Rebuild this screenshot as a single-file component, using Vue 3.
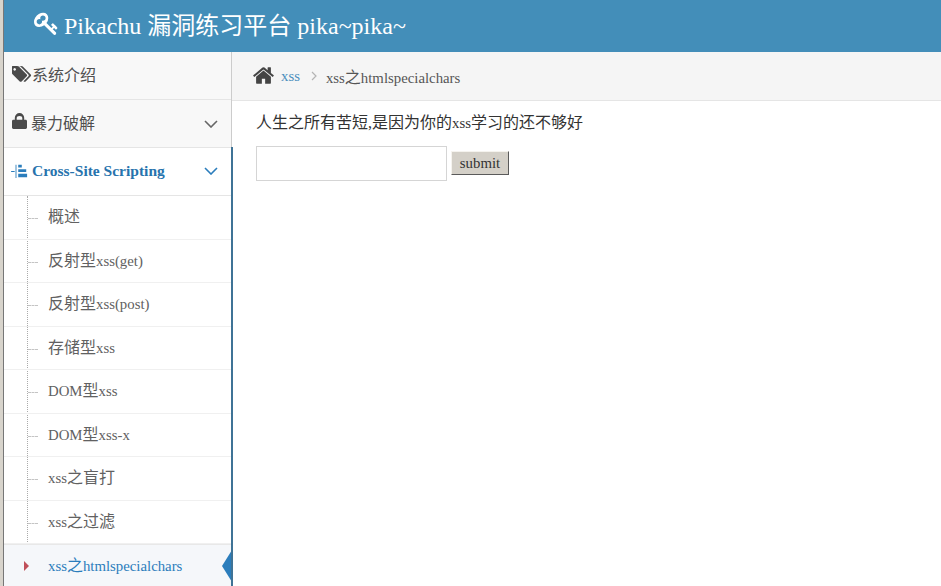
<template>
  <div class="page">
    <header class="navbar">
      <svg class="key" viewBox="0 0 1792 1792"><path :d="icons.key" /></svg>
      <span class="brand">Pikachu 漏洞练习平台 pika~pika~</span>
    </header>
    <div class="body-wrap">
      <aside class="sidebar">
        <div class="nav-top">
          <svg class="ico tag" viewBox="0 0 1920 1792"><path :d="icons.tags" /></svg>
          <span>系统介绍</span>
        </div>
        <div class="nav-top">
          <svg class="ico lock" viewBox="0 0 16 18"><path d="M1.500 7H3V5a5 5 0 0 1 10 0v2h1.500c.8 0 1.500.7 1.500 1.500v7c0 .8-.7 1.500-1.500 1.500h-13C.7 17 0 16.300 0 15.500v-7C0 7.700.7 7 1.500 7zM5 7h6V5.500a3 2.500 0 0 0-6 0z" /></svg>
          <span>暴力破解</span>
          <svg class="chev" viewBox="0 0 14 8"><path d="M1 1l6 6 6-6" /></svg>
        </div>
        <div class="nav-open">
          <svg class="tree-ico" viewBox="0 0 20 18">
            <path d="M0 9h4v1H0zM5 2h1v15H5z" />
            <path d="M8 2h4v3H8zM8 7h9v3H8zM8 12h10v4H8z" />
          </svg>
          <span>Cross-Site Scripting</span>
          <svg class="chev" viewBox="0 0 14 8"><path d="M1 1l6 6 6-6" /></svg>
        </div>
        <ul class="submenu">
          <li v-for="item in subItems" :key="item.join()" :class="{ active: item === activeItem }">
            <span v-for="(part, i) in item" :key="i" :class="{ lat: /^[\x00-\x7f]+$/.test(part) }">{{ part }}</span>
          </li>
        </ul>
      </aside>
      <main class="content">
        <div class="breadcrumbs">
          <svg class="home" viewBox="0 0 1792 1792"><path :d="icons.home" /></svg>
          <a class="crumb-link lat">xss</a>
          <svg class="crumb-sep" viewBox="0 0 6 10"><path d="M1 1l4 4-4 4" /></svg>
          <span class="crumb-cur"><span class="lat">xss</span>之<span class="lat">htmlspecialchars</span></span>
        </div>
        <div class="page-body">
          <p class="lead">人生之所有苦短,是因为你的<span class="lat">xss</span>学习的还不够好</p>
          <form class="form" @submit.prevent>
            <input class="text-in" type="text" />
            <input class="btn" type="submit" value="submit" />
          </form>
        </div>
      </main>
    </div>
  </div>
</template>

<script setup>
const icons = {
  key: 'M832 512q0-80-56-136t-136-56-136 56-56 136q0 42 19 83-41-19-83-19-80 0-136 56t-56 136 56 136 136 56 136-56 56-136q0-42-19-83 41 19 83 19 80 0 136-56t56-136zm851 704q0 17-49 66t-66 49q-9 0-28.5-16t-36.5-33-38.5-40-24.5-26l-96 96 220 220q28 28 28 68 0 42-39 81t-81 39q-40 0-68-28l-671-671q-176 131-365 131-163 0-265.5-102.5t-102.5-265.5q0-160 95-313t248-248 313-95q163 0 265.5 102.5t102.5 265.5q0 189-131 365l355 355 96-96q-3-3-26-24.5t-40-38.5-33-36.5-16-28.5q0-17 49-66t66-49q13 0 23 10 6 6 46 44.5t82 79.5 86.5 86 73 78 28.5 41z',
  tags: 'M384 448q0-53-37.5-90.5t-90.5-37.5-90.5 37.5-37.5 90.5 37.5 90.5 90.5 37.5 90.5-37.5 37.5-90.5zm1067 576q0 53-37 90l-491 492q-39 37-91 37-53 0-90-37l-715-716q-38-37-64.5-101t-26.5-117v-416q0-52 38-90t90-38h416q53 0 117 26.5t102 64.5l715 714q37 39 37 91zm384 0q0 53-37 90l-491 492q-38 38-91 38-36 0-59-14t-53-45l470-470q37-37 37-90 0-52-37-91l-715-714q-38-38-102-64.5t-117-26.5h224q53 0 117 26.5t102 64.5l715 714q37 39 37 91z',
  home: 'M1472 992v480q0 26-19 45t-45 19h-384v-384h-256v384h-384q-26 0-45-19t-19-45v-480q0-1 .5-3t.5-3l575-474 575 474q1 2 1 6zm223-69l-62 74q-8 9-21 11h-3q-13 0-21-7l-692-577-692 577q-12 8-24 7-13-2-21-11l-62-74q-8-10-7-23.5t11-21.5l719-599q32-26 76-26t76 26l244 204v-195q0-14 9-23t23-9h192q14 0 23 9t9 23v408l219 182q10 8 11 21.5t-7 23.5z',
}

const activeItem = ['xss', '之', 'htmlspecialchars']
const subItems = [
  ['概述'],
  ['反射型', 'xss(get)'],
  ['反射型', 'xss(post)'],
  ['存储型', 'xss'],
  ['DOM', '型', 'xss'],
  ['DOM', '型', 'xss-x'],
  ['xss', '之盲打'],
  ['xss', '之过滤'],
  activeItem,
]
</script>

<style>
html, body {
  margin: 0;
  height: 100%;
  overflow: hidden;
  background: #fff;
}
</style>

<style scoped>
.page {
  height: 586px;
  overflow: hidden;
  border-left: 3px solid #d8d4cc;
  font-family: "Liberation Serif", "Noto Sans CJK SC", serif;
  color: #393939;
  font-size: 16px;
}

.navbar {
  height: 52px;
  background: #438eb9;
  border-left: 1px solid #777;
  color: #fff;
  display: flex;
  align-items: center;
  padding-left: 30px;
  padding-bottom: 5px;
  gap: 5px;
  box-sizing: border-box;
}

.key {
  width: 25px;
  height: 25px;
  fill: #fff;
}

.brand {
  font-size: 24px;
}

.body-wrap {
  display: flex;
  height: 534px;
  border-left: 1px solid #777;
}

.sidebar {
  width: 227px;
  flex: none;
  border-right: 1px solid #ccc;
  position: relative;
  z-index: 1;
}

.nav-top,
.nav-open {
  display: flex;
  align-items: center;
  box-sizing: border-box;
  height: 48px;
  border-bottom: 1px solid #e5e5e5;
}

.nav-top {
  padding: 0 0 4px 8px;
  background: #f8f8f8;
  color: #4f4f4f;
}

.nav-open {
  padding: 0 0 2px 7px;
  background: #fff;
  color: #2773ad;
  font-size: 15.5px;
  font-weight: 700;
}

.ico {
  height: 20px;
  width: 20px;
  fill: #4a4a4a;
}

.tag {
  width: 20px;
}

.lock {
  width: 15px;
  height: 17px;
  margin: 0 4px 0 0;
}

.chev {
  width: 14px;
  height: 8px;
  margin-left: auto;
  margin-right: 13px;
  fill: none;
  stroke: #666;
  stroke-width: 1.6;
}

.nav-top .chev {
  margin-top: 4px;
}

.nav-open .chev {
  stroke: #2b7dbc;
}

.tree-ico {
  width: 18px;
  height: 16px;
  margin-right: 3px;
  fill: #2b7dbc;
}

.submenu {
  list-style: none;
  margin: 0;
  padding: 0;
  position: relative;
}

.submenu::before {
  content: "";
  position: absolute;
  left: 23px;
  top: 0;
  bottom: 0;
  border-left: 1px dotted #aaa;
}

.submenu li {
  height: 43.5px;
  line-height: 41px;
  padding-left: 44px;
  box-sizing: border-box;
  border-bottom: 1px solid #f0f0f0;
  color: #616161;
  position: relative;
  white-space: nowrap;
}

.submenu li::before {
  content: "";
  position: absolute;
  left: 24px;
  top: 22px;
  width: 10px;
  border-top: 1px dashed #c4c4c4;
}

.submenu li.active {
  background: #f5f7fa;
  color: #2b7dbc;
  border-top: 1px solid #e8e8e8;
  line-height: 42px;
}

.submenu li.active::before {
  left: 20px;
  top: 16px;
  width: 0;
  border: 5px solid transparent;
  border-left-color: #c0505a;
  border-right: 0;
}

.submenu li.active::after {
  content: "";
  position: absolute;
  right: -1px;
  top: 5px;
  border: 16px solid transparent;
  border-right: 10px solid #2b7dbc;
  border-left: 0;
}

.sidebar::after {
  content: "";
  position: absolute;
  right: -2px;
  top: 95px;
  bottom: 0;
  width: 2px;
  background: #3f7396;
}

.lat {
  font-size: 14.8px;
}

.content {
  flex: 1;
  min-width: 0;
}

.breadcrumbs {
  height: 49px;
  box-sizing: border-box;
  background: #f5f5f5;
  border-bottom: 1px solid #e5e5e5;
  display: flex;
  align-items: center;
  padding-left: 20px;
}

.home {
  width: 23px;
  height: 23px;
  fill: #444;
  margin: -2px 5px 0 0;
}

.crumb-link {
  color: #4c8fbd;
  margin-left: 1px;
}

.crumb-sep {
  width: 6px;
  height: 10px;
  margin: 0 9px 0 11px;
  fill: none;
  stroke: #b4b4b4;
  stroke-width: 1.2;
}

.crumb-cur {
  color: #555;
  margin-top: -1px;
}

.page-body {
  padding: 11px 0 0 24px;
}

.lead {
  margin: 0;
  line-height: 22px;
  color: #333;
}

.form {
  display: flex;
  align-items: flex-start;
  margin-top: 12px;
  gap: 4px;
}

.text-in {
  width: 191px;
  height: 35px;
  box-sizing: border-box;
  border: 1px solid #d5d5d5;
  background: #fff;
  padding: 0 4px;
}

.btn {
  width: 58px;
  height: 24px;
  box-sizing: border-box;
  margin-top: 5px;
  padding: 0;
  font: 14.8px "Liberation Serif", serif;
  color: #333;
  background: #d4d0c8;
  border: 1px solid;
  border-color: #f5f3ee #5a5a5a #5a5a5a #f5f3ee;
}
</style>
